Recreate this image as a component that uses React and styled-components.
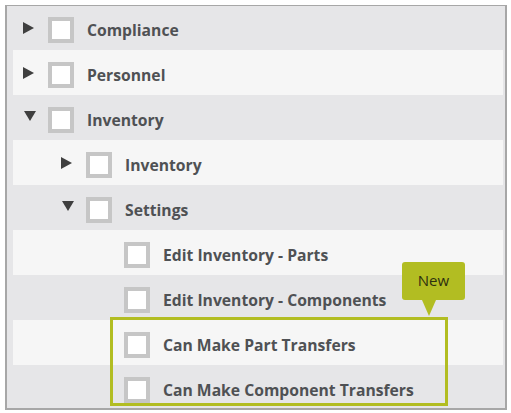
import React from "react";
import styled, { createGlobalStyle } from "styled-components";

const GlobalStyle = createGlobalStyle`
  html, body {
    margin: 0;
    padding: 0;
    background: #ffffff;
  }
  body {
    font-family: "Open Sans", "Liberation Sans", Arial, sans-serif;
  }
`;

const items = [
  { label: "Compliance", level: 0, arrow: "right" },
  { label: "Personnel", level: 0, arrow: "right" },
  { label: "Inventory", level: 0, arrow: "down" },
  { label: "Inventory", level: 1, arrow: "right" },
  { label: "Settings", level: 1, arrow: "down" },
  { label: "Edit Inventory - Parts", level: 2 },
  { label: "Edit Inventory - Components", level: 2 },
  { label: "Can Make Part Transfers", level: 2 },
  { label: "Can Make Component Transfers", level: 2 },
];

function Arrow({ dir }) {
  if (dir === "down") {
    return (
      <svg width="12" height="10" viewBox="0 0 12 10">
        <polygon points="0,0 12,0 6,10" fill="#3f3f3f" />
      </svg>
    );
  }
  return (
    <svg width="11" height="12" viewBox="0 0 11 12">
      <polygon points="0,0 11,6 0,12" fill="#3f3f3f" />
    </svg>
  );
}

export default function App() {
  return (
    <>
      <GlobalStyle />
      <Frame>
        <List>
          {items.map((item, idx) => (
            <Row key={idx} $alt={idx % 2 === 1} $level={item.level}>
              <ArrowSlot $down={item.arrow === "down"}>
                {item.arrow && <Arrow dir={item.arrow} />}
              </ArrowSlot>
              <Check />
              <Label>{item.label}</Label>
            </Row>
          ))}
        </List>
        <Highlight />
        <Tag>New</Tag>
      </Frame>
    </>
  );
}

const Frame = styled.div`
  position: relative;
  margin: 5px 4px 0 5px;
  height: 405px;
  border: 2px solid #a7a7a7;
  border-top-width: 1px;
  background: #e6e6e8;
  overflow: hidden;
  box-sizing: border-box;
`;

const List = styled.div`
  display: flex;
  flex-direction: column;
  padding: 0 2px 0 6px;
  margin-top: -1px;
`;

const Row = styled.div`
  display: flex;
  align-items: center;
  height: 45px;
  box-sizing: border-box;
  padding-top: 5px;
  padding-left: ${(p) => 10 + p.$level * 38}px;
  background: ${(p) => (p.$alt ? "#f6f6f6" : "#e6e6e8")};
`;

const ArrowSlot = styled.div`
  width: 25px;
  flex-shrink: 0;
  display: flex;
  align-items: center;
  margin-left: ${(p) => (p.$down ? "1px" : "0")};
  margin-right: ${(p) => (p.$down ? "-1px" : "0")};
  margin-top: ${(p) => (p.$down ? "-8px" : "-5px")};
`;

const Check = styled.div`
  width: 26px;
  height: 26px;
  box-sizing: border-box;
  border: 4px solid #c6c6c6;
  background: #ffffff;
  flex-shrink: 0;
`;

const Label = styled.span`
  margin-left: 13px;
  font-size: 15.7px;
  font-weight: 700;
  color: #4f5154;
  white-space: nowrap;
`;

const Highlight = styled.div`
  position: absolute;
  left: 103px;
  top: 311px;
  width: 338px;
  height: 89px;
  box-sizing: border-box;
  border: 3px solid #b2bd22;
  pointer-events: none;
`;

const Tag = styled.div`
  position: absolute;
  left: 395px;
  top: 256px;
  width: 63px;
  height: 38px;
  border-radius: 3px;
  background: #b2bd22;
  color: #2e3010;
  font-size: 15px;
  display: flex;
  align-items: center;
  justify-content: center;
  box-sizing: border-box;
  padding-bottom: 2px;

  &::after {
    content: "";
    position: absolute;
    left: 20px;
    top: 38px;
    border-left: 7px solid transparent;
    border-right: 7px solid transparent;
    border-top: 16px solid #b2bd22;
  }
`;
